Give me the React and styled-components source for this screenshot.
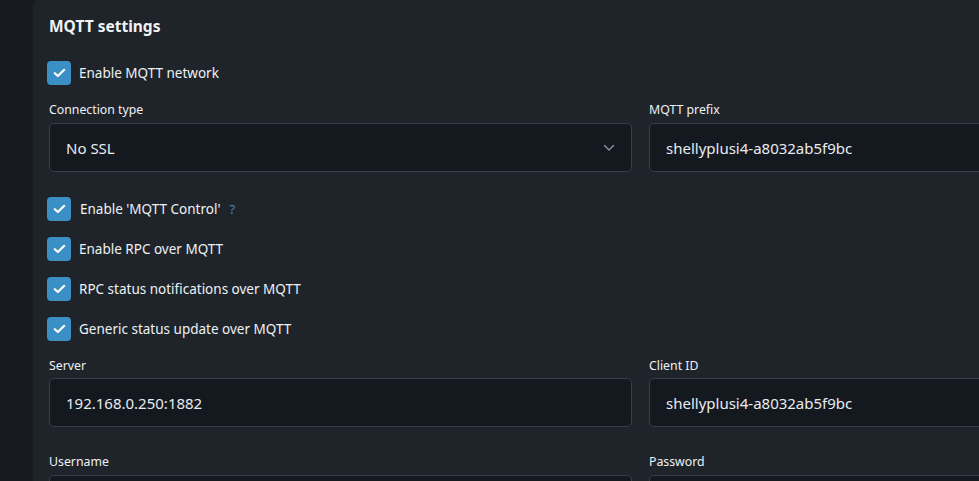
import React from "react";
import styled, { createGlobalStyle } from "styled-components";

const Global = createGlobalStyle`
  html, body { margin: 0; padding: 0; background: #171b21; }
  body { font-family: "Noto Sans", "Open Sans", sans-serif; color: #e6ebf0; overflow: hidden; }
  * { box-sizing: border-box; }
`;

const Page = styled.div`
  display: flex;
  height: 481px;
  width: 979px;
  overflow: hidden;
  background: #171b21;
`;

const Sidebar = styled.div`
  width: 33px;
  flex: none;
`;

const Panel = styled.section`
  flex: none;
  width: 1300px;
  background: #1f242b;
  border-top-left-radius: 6px;
  padding: 16px 16px 0 16px;
  display: flex;
  flex-direction: column;
`;

const Heading = styled.h2`
  margin: 0;
  font-size: 15.5px;
  line-height: 20px;
  font-weight: 700;
  color: #f0f3f6;
`;

const CheckRow = styled.label`
  display: flex;
  align-items: center;
  height: 24px;
  gap: 8px;
  margin-top: ${(p) => p.$mt}px;
  margin-left: -2px;
  font-size: 13.5px;
  color: #eef1f4;
`;

const Box = styled.span`
  width: 24px;
  height: 24px;
  flex: none;
  border-radius: 4px;
  background: #3a8fc4;
  display: flex;
  align-items: center;
  justify-content: center;
`;

const LabelText = styled.span`
  padding-left: ${(p) => p.$pl || 0}px;
`;

const Help = styled.span`
  color: #3f86bd;
  margin-left: 9px;
  font-size: 13px;
`;

const Grid = styled.div`
  display: grid;
  grid-template-columns: 583px 583px;
  column-gap: 17px;
  margin-top: ${(p) => p.$mt}px;
`;

const Field = styled.div`
  display: flex;
  flex-direction: column;
`;

const FieldLabel = styled.div`
  font-size: 12.3px;
  line-height: 20px;
  margin-bottom: ${(p) => p.$mb}px;
  color: #eef1f4;
`;

const InputBox = styled.div`
  height: 49px;
  border: 1px solid #363f4a;
  border-radius: 5px;
  background: #141920;
  display: flex;
  align-items: center;
  justify-content: space-between;
  padding: 0 16px;
  font-size: 15px;
  color: #e8ecf0;
`;

const Chevron = () => (
  <svg width="12" height="8" viewBox="0 0 12 8" fill="none">
    <path d="M1.5 1.5 L6 6 L10.5 1.5" stroke="#8b96a2" strokeWidth="1.4" strokeLinecap="round" strokeLinejoin="round" />
  </svg>
);

const Check = () => (
  <svg width="13" height="10" viewBox="0 0 13 10" fill="none">
    <path d="M1.8 5.2 L4.9 8 L11.2 1.8" stroke="#ffffff" strokeWidth="2.2" strokeLinecap="round" strokeLinejoin="round" />
  </svg>
);

const CheckItem = ({ children, mt, pl, help }) => (
  <CheckRow $mt={mt}>
    <Box><Check /></Box>
    <LabelText $pl={pl}>
      {children}
      {help && <Help>?</Help>}
    </LabelText>
  </CheckRow>
);

export default function App() {
  return (
    <Page>
      <Global />
      <Sidebar />
      <Panel>
        <Heading>MQTT settings</Heading>
        <CheckItem mt={25}>Enable MQTT network</CheckItem>
        <Grid $mt={15}>
          <Field>
            <FieldLabel $mb={3}>Connection type</FieldLabel>
            <InputBox>No SSL<Chevron /></InputBox>
          </Field>
          <Field>
            <FieldLabel $mb={3}>MQTT prefix</FieldLabel>
            <InputBox>shellyplusi4-a8032ab5f9bc</InputBox>
          </Field>
        </Grid>
        <CheckItem mt={25} pl={1} help>Enable 'MQTT Control'</CheckItem>
        <CheckItem mt={16}>Enable RPC over MQTT</CheckItem>
        <CheckItem mt={16}>RPC status notifications over MQTT</CheckItem>
        <CheckItem mt={16}>Generic status update over MQTT</CheckItem>
        <Grid $mt={15}>
          <Field>
            <FieldLabel $mb={2}>Server</FieldLabel>
            <InputBox>192.168.0.250:1882</InputBox>
          </Field>
          <Field>
            <FieldLabel $mb={2}>Client ID</FieldLabel>
            <InputBox>shellyplusi4-a8032ab5f9bc</InputBox>
          </Field>
        </Grid>
        <Grid $mt={25}>
          <Field>
            <FieldLabel $mb={3}>Username</FieldLabel>
            <InputBox />
          </Field>
          <Field>
            <FieldLabel $mb={3}>Password</FieldLabel>
            <InputBox />
          </Field>
        </Grid>
      </Panel>
    </Page>
  );
}
